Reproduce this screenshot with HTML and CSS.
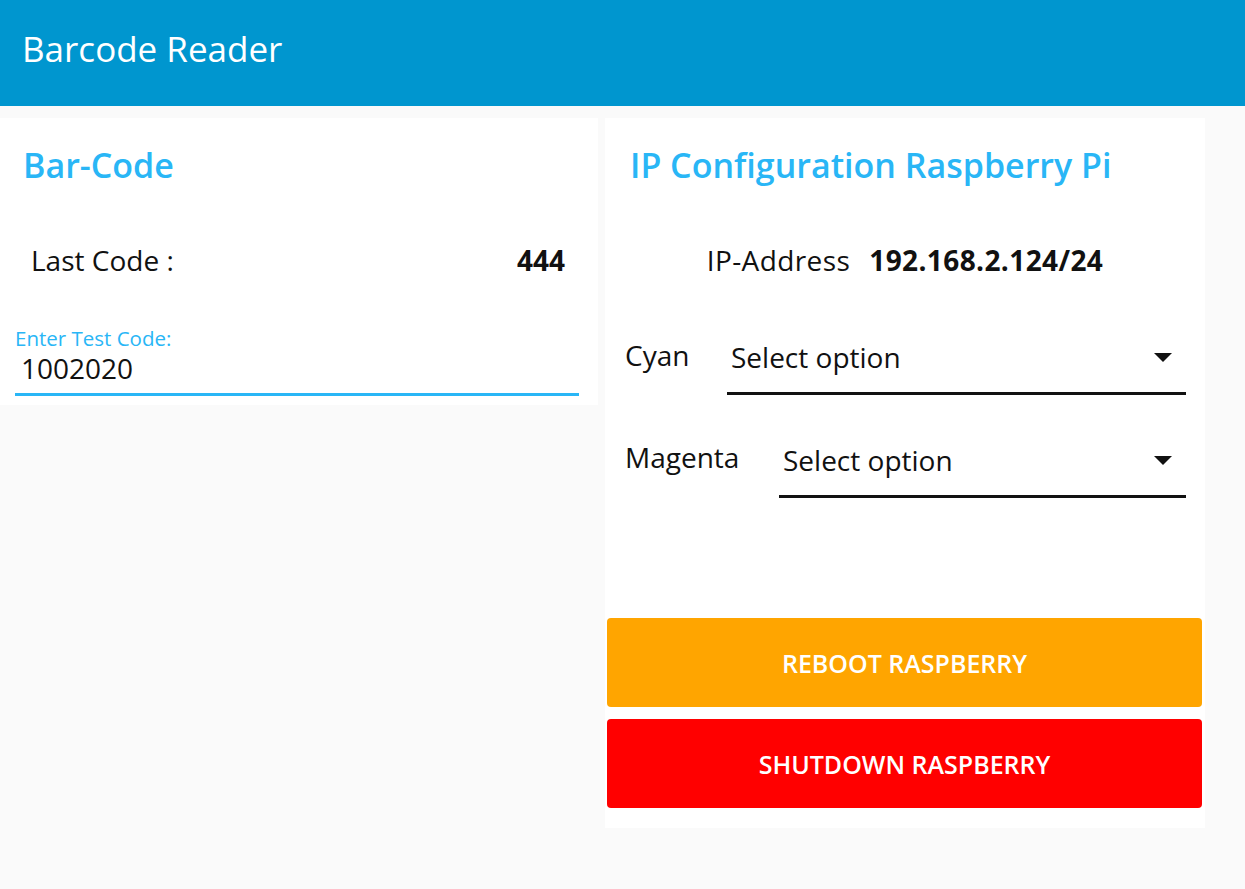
FILE: index.html
```html
<!DOCTYPE html>
<html lang="en">
<head>
<meta charset="utf-8">
<title>Barcode Reader</title>
<link rel="stylesheet" href="styles.css">
</head>
<body>
<header class="topbar">
  <h1 class="app-title">Barcode Reader</h1>
</header>
<main class="content">
  <section class="card card-left">
    <h2 class="card-title">Bar-Code</h2>
    <div class="code-row">
      <span class="code-label">Last Code :</span>
      <span class="code-value">444</span>
    </div>
    <label class="field">
      <span class="field-label">Enter Test Code:</span>
      <span class="field-input">1002020</span>
    </label>
  </section>
  <section class="card card-right">
    <h2 class="card-title card-title-right">IP Configuration Raspberry Pi</h2>
    <div class="ip-row">
      <span class="ip-label">IP-Address</span>
      <span class="ip-value">192.168.2.124/24</span>
    </div>
    <div class="select-row">
      <span class="select-label">Cyan</span>
      <div class="select">
        <span class="select-text">Select option</span>
        <svg class="select-arrow" width="18" height="9" viewBox="0 0 18 9"><path d="M0 0 L18 0 L9 9 Z" fill="#111"/></svg>
      </div>
    </div>
    <div class="select-row select-row-2">
      <span class="select-label">Magenta</span>
      <div class="select">
        <span class="select-text">Select option</span>
        <svg class="select-arrow" width="18" height="9" viewBox="0 0 18 9"><path d="M0 0 L18 0 L9 9 Z" fill="#111"/></svg>
      </div>
    </div>
    <div class="actions">
      <button class="btn btn-reboot">REBOOT RASPBERRY</button>
      <button class="btn btn-shutdown">SHUTDOWN RASPBERRY</button>
    </div>
  </section>
</main>
</body>
</html>
```

FILE: styles.css
```css
* { box-sizing: border-box; }
html, body {
  margin: 0;
  padding: 0;
}
body {
  background: #fafafa;
  font-family: "Open Sans", "Noto Sans", sans-serif;
  color: #111;
  width: 1245px;
  height: 889px;
  overflow: hidden;
}
.topbar {
  height: 106px;
  background: #0096cf;
  padding-left: 22px;
  display: flex;
  align-items: flex-start;
}
.app-title {
  margin: 0;
  margin-top: 25px;
  font-size: 35px;
  line-height: 48px;
  font-weight: 400;
  color: #fff;
}
.content {
  display: flex;
  align-items: flex-start;
  gap: 7px;
  padding-top: 12px;
}
.card {
  background: #fff;
}
.card-left {
  width: 598px;
  height: 287px;
}
.card-right {
  width: 600px;
  height: 710px;
}
.card-title {
  margin: 27px 0 0 23px;
  font-size: 34px;
  line-height: 40px;
  font-weight: 600;
  color: #29b6f6;
}
.card-title-right {
  margin-left: 25px;
}
.code-row {
  display: flex;
  justify-content: space-between;
  margin-top: 57px;
  padding: 0 33px 0 31px;
  font-size: 28px;
  line-height: 36px;
}
.code-value {
  font-weight: 700;
}
.field {
  display: flex;
  flex-direction: column;
  margin: 48px 0 0 15px;
  width: 564px;
  border-bottom: 3px solid #29b6f6;
  padding-bottom: 7px;
}
.field-label {
  font-size: 20.5px;
  line-height: 24px;
  color: #29b6f6;
}
.field-input {
  font-size: 28px;
  line-height: 36px;
  padding-left: 6px;
}
.ip-row {
  display: flex;
  justify-content: center;
  gap: 19px;
  margin-top: 57px;
  font-size: 28px;
  line-height: 36px;
  letter-spacing: 0.4px;
}
.ip-value {
  font-weight: 700;
}
.select-row {
  display: flex;
  align-items: flex-start;
  margin-top: 59px;
  padding: 0 19px 0 20px;
}
.select-row-2 {
  margin-top: 44px;
}
.select-label {
  font-size: 28px;
  line-height: 36px;
  width: 102px;
  flex: none;
}
.select-row-2 .select-label {
  width: 154px;
}
.select {
  flex: 1;
  display: flex;
  align-items: flex-start;
  justify-content: space-between;
  height: 56px;
  margin-top: 2px;
  padding: 0 14px 0 4px;
  border-bottom: 3px solid #111;
}
.select-row-2 .select {
  margin-top: 3px;
}
.select-text {
  font-size: 28px;
  line-height: 36px;
}
.select-arrow {
  display: block;
  margin-top: 14px;
}
.actions {
  display: flex;
  flex-direction: column;
  gap: 12px;
  margin: 120px 3px 0 2px;
}
.btn {
  height: 89px;
  border: none;
  border-radius: 4px;
  color: #fff;
  font-family: "Open Sans", "Noto Sans", sans-serif;
  font-size: 25px;
  font-weight: 600;
}
.btn-reboot {
  background: #ffa500;
}
.btn-shutdown {
  background: #ff0000;
}
```
